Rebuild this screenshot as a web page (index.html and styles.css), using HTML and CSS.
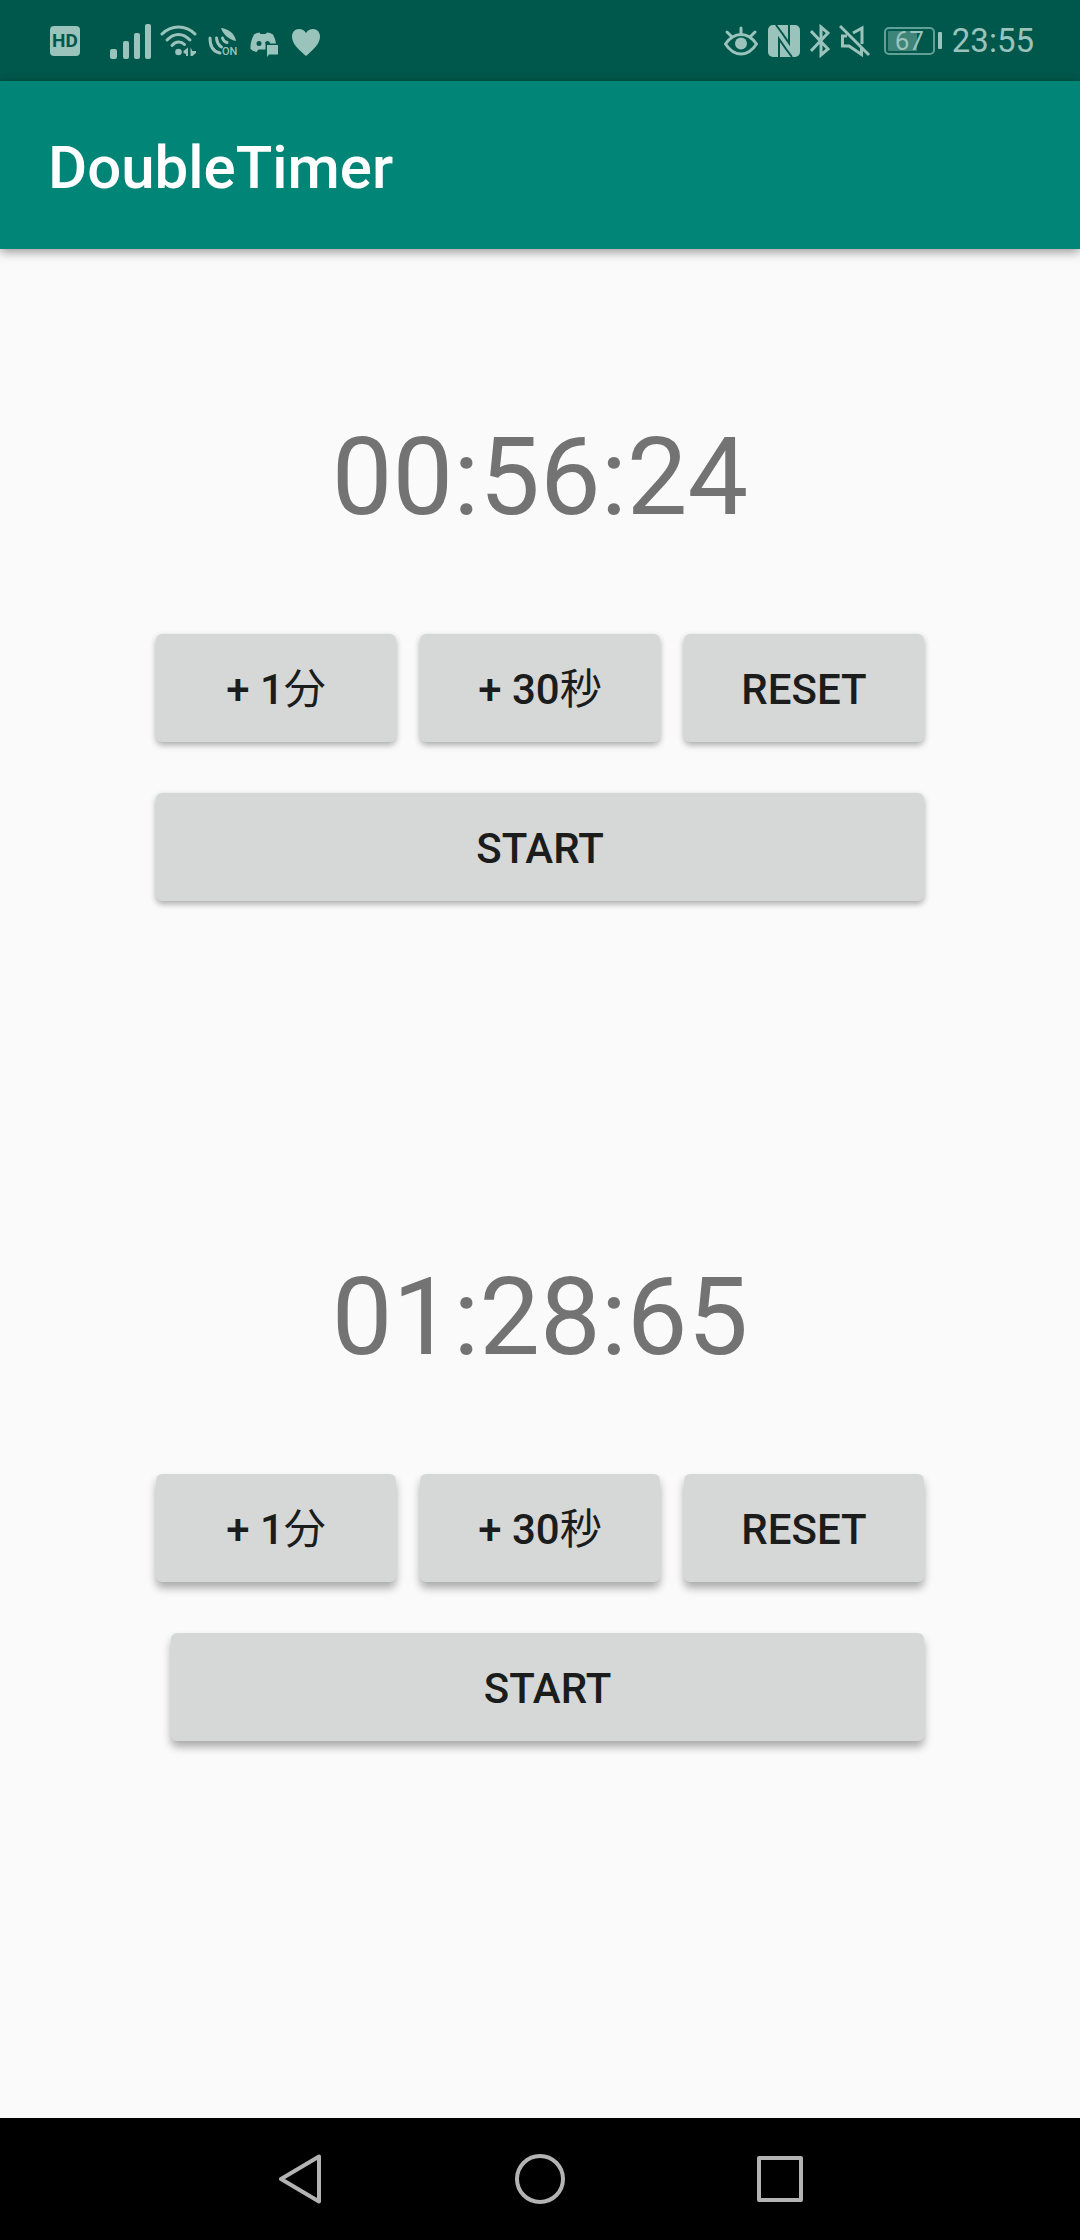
FILE: index.html
```html
<!DOCTYPE html>
<html lang="ja">
<head>
<meta charset="utf-8">
<meta name="viewport" content="width=device-width, initial-scale=1">
<title>DoubleTimer</title>
<link rel="stylesheet" href="styles.css">
</head>
<body>
<div class="status-bar">
  <div class="status-group">
    <span class="hd-badge">HD</span>
    <svg class="icon icon-signal" width="42" height="40" viewBox="0 0 42 40" aria-hidden="true">
      <rect x="0" y="28" width="7" height="10" rx="2"/><rect x="13" y="20" width="6" height="18" rx="2"/><rect x="24" y="12" width="6" height="26" rx="2"/><rect x="35" y="3" width="6" height="35" rx="2"/>
    </svg>
    <svg class="icon icon-wifi" width="38" height="40" viewBox="0 0 38 40" aria-hidden="true">
      <g fill="none" stroke="currentColor" stroke-width="3" stroke-linecap="round"><path d="M2 13C11 3.500 26 3.500 35 13"/><path d="M7 19C14 11.500 23 11.500 30 19"/><path d="M12 24.500C16 20 21 20 24.500 23.500"/></g>
      <circle cx="18.500" cy="31" r="3.300"/><path d="M28 26.500V35H26V33L23.500 32V30ZM30.500 35V26.500L32 29V30H36V32L32.500 35Z"/>
    </svg>
    <svg class="icon icon-nearby" width="30" height="40" viewBox="0 0 30 40" aria-hidden="true">
      <path d="M13 7C21 8 27 13 28 20C22 19 15 14 13 7Z"/>
      <g fill="none" stroke="currentColor" stroke-width="3" stroke-linecap="round"><path d="M2 17C2 26 6 31 12 32"/><path d="M8.500 17C9 22 11 24.500 13.500 26"/><path d="M14.500 17C15 19 16.500 21 19 21.500"/></g>
      <text x="14" y="34" class="icon-label">ON</text>
    </svg>
    <svg class="icon icon-discord" width="28" height="40" viewBox="0 0 28 40" aria-hidden="true">
      <path fill-rule="evenodd" d="M4 13.500Q7 11.500 9.500 11.500L10.500 13H15.500L17 11.500Q20 11.500 23 13.500Q25.500 18 26 22.500H15.500V28.500H8.500L6.500 31Q2.500 30 .5 28Q0 21 4 13.500ZM9 20A2.500 2.500 0 1 0 9 25A2.500 2.500 0 1 0 9 20ZM17.500 20Q15 20 15 22.500H20Q20 20 17.500 20Z"/><path d="M17 24H28V33.500H19L17 36Z"/>
    </svg>
    <svg class="icon" width="28" height="40" viewBox="0 0 28 40" aria-hidden="true">
      <path d="M14 35Q12.500 34 9 30.500C4 26 0 21 0 15.500C0 11 3 8 7 8C10 8 12.500 9.500 14 12C15.500 9.500 18 8 21 8C25 8 28 11 28 15.500C28 21 24 26 19 30.500Q15.500 34 14 35Z"/>
    </svg>
  </div>
  <div class="status-group">
    <svg class="icon icon-eye" width="34" height="40" viewBox="0 0 34 40" aria-hidden="true">
      <g fill="none" stroke="currentColor" stroke-width="3" stroke-linecap="round"><path d="M1.500 23Q8 13.500 17 13.500Q26 13.500 32.500 23Q26 33 17 33Q8 33 1.500 23Z"/><path d="M17 13V7M7 15L3 11M27 15L31 11"/></g><circle cx="17" cy="22.500" r="6"/>
    </svg>
    <svg class="icon icon-nfc" width="32" height="40" viewBox="0 0 32 40" aria-hidden="true">
      <rect x="0" y="4" width="32" height="32" rx="5"/><path class="cutout" d="M8 4L14 12L21 22V4M24 36L18 28L11 18V36"/>
    </svg>
    <svg class="icon icon-bluetooth" width="20" height="40" viewBox="0 0 20 40" aria-hidden="true">
      <path fill="none" stroke="currentColor" stroke-width="3" d="M1 10L18 28L11 34V6L18 12L1 30"/>
    </svg>
    <svg class="icon icon-mute" width="32" height="40" viewBox="0 0 32 40" aria-hidden="true">
      <path fill="none" stroke="currentColor" stroke-width="3" d="M1 5L30 34M14 12L23 7V23M8 15H3.500V25H10L22.500 33.500V27"/>
    </svg>
    <span class="battery"><span class="battery-level">67</span></span>
    <span class="clock">23:55</span>
  </div>
</div>
<header class="app-bar"><h1 class="app-title">DoubleTimer</h1></header>
<main class="timers">
  <section class="timer" aria-label="Timer 1">
    <div class="time">00:56:24</div>
    <div class="controls">
      <button class="button" type="button">+ 1<span class="unit">分</span></button>
      <button class="button" type="button">+ 30<span class="unit">秒</span></button>
      <button class="button" type="button">RESET</button>
    </div>
    <button class="button button-start" type="button">START</button>
  </section>
  <section class="timer timer-raised" aria-label="Timer 2">
    <div class="time">01:28:65</div>
    <div class="controls">
      <button class="button" type="button">+ 1<span class="unit">分</span></button>
      <button class="button" type="button">+ 30<span class="unit">秒</span></button>
      <button class="button" type="button">RESET</button>
    </div>
    <button class="button button-start button-inset" type="button">START</button>
  </section>
</main>
<nav class="nav-bar" aria-label="System">
  <button class="nav-button" type="button" aria-label="Back"><svg width="50" height="50" viewBox="0 0 50 50"><path d="M44 2.500V47.500L6 25Z"/></svg></button>
  <button class="nav-button" type="button" aria-label="Home"><svg width="50" height="50" viewBox="0 0 50 50"><circle cx="25" cy="25" r="23"/></svg></button>
  <button class="nav-button" type="button" aria-label="Recent apps"><svg width="50" height="50" viewBox="0 0 50 50"><rect x="4" y="4" width="42" height="42"/></svg></button>
</nav>
</body>
</html>
```
FILE: styles.css
```css
* {
  box-sizing: border-box;
}

body {
  display: flex;
  flex-direction: column;
  min-height: 100vh;
  margin: 0;
  background: #fafafa;
  font-family: Roboto, "Noto Sans CJK JP", sans-serif;
}

/* Status bar */
.status-bar {
  display: flex;
  justify-content: space-between;
  align-items: center;
  height: 81px;
  padding: 0 46px 0 50px;
  background: #00574b;
  color: #99c3bb;
}

.status-group {
  display: flex;
  align-items: center;
}

.icon {
  display: block;
  fill: currentColor;
}

.hd-badge {
  width: 30px;
  height: 30px;
  margin-right: 30px;
  border-radius: 4px;
  background: #99c3bb;
  color: #00574b;
  font-size: 19px;
  font-weight: 700;
  line-height: 30px;
  text-align: center;
}

.icon-signal {
  margin-right: 8px;
}

.icon-wifi {
  margin-right: 10px;
}

.icon-nearby {
  margin-right: 12px;
}

.icon-discord {
  margin-right: 14px;
}

.icon-label {
  font-size: 11px;
  font-weight: 500;
}

.icon-eye,
.icon-nfc {
  margin-right: 10px;
}

.icon-bluetooth {
  margin-right: 9px;
}

.icon-mute {
  margin-right: 13px;
}

.cutout {
  fill: none;
  stroke: #00574b;
  stroke-width: 2;
}

.battery {
  display: flex;
  align-items: center;
  margin-right: 10px;
}

.battery-level {
  width: 51px;
  height: 28px;
  padding: 2px;
  border: 2px solid #5fa097;
  border-radius: 5px;
  background: linear-gradient(90deg, #3f8478 67%, transparent 67%) content-box;
  font-size: 26px;
  line-height: 20px;
  text-align: center;
}

.battery::after {
  width: 4px;
  height: 17px;
  margin-left: 3px;
  border-radius: 1px;
  background: currentColor;
  content: "";
}

.clock {
  font-size: 33px;
  line-height: 40px;
}

/* App bar */
.app-bar {
  display: flex;
  align-items: center;
  height: 168px;
  padding: 6px 48px 0;
  background: #008577;
  box-shadow: 0 3px 10px rgba(0, 0, 0, 0.4);
}

.app-title {
  margin: 0;
  color: #fff;
  font-size: 60px;
  font-weight: 500;
  line-height: 72px;
}

/* Timers */
.timers {
  display: flex;
  flex: 1;
  flex-direction: column;
  gap: 352px;
  padding: 164px 156px;
}

.timer {
  display: flex;
  flex-direction: column;
  --shadow: 0 3px 6px rgba(0, 0, 0, 0.32);
}

.timer-raised {
  --shadow: 0 6px 8px rgba(0, 0, 0, 0.32);
}

.time {
  margin-bottom: 93px;
  color: #737373;
  font-size: 108px;
  line-height: 128px;
  text-align: center;
}

.controls {
  display: grid;
  grid-template-columns: repeat(3, 1fr);
  gap: 24px;
  margin-bottom: 51px;
}

.button {
  height: 108px;
  padding: 4px 0 0;
  border: 0;
  border-radius: 6px;
  background: #d6d8d7;
  box-shadow: var(--shadow);
  color: #1b1c1c;
  font-family: inherit;
  font-size: 42px;
  font-weight: 500;
  line-height: 48px;
}

.button-inset {
  margin-left: 15px;
}

.unit {
  font-weight: 400;
  line-height: 1;
}

/* Navigation bar */
.nav-bar {
  display: flex;
  justify-content: center;
  gap: 190px;
  padding: 36px 0;
  background: #000;
}

.nav-button {
  display: block;
  height: 50px;
  padding: 0;
  border: 0;
  background: none;
}

.nav-button svg {
  display: block;
  fill: none;
  stroke: #b3b3b3;
  stroke-width: 4;
  stroke-linejoin: round;
}
```
